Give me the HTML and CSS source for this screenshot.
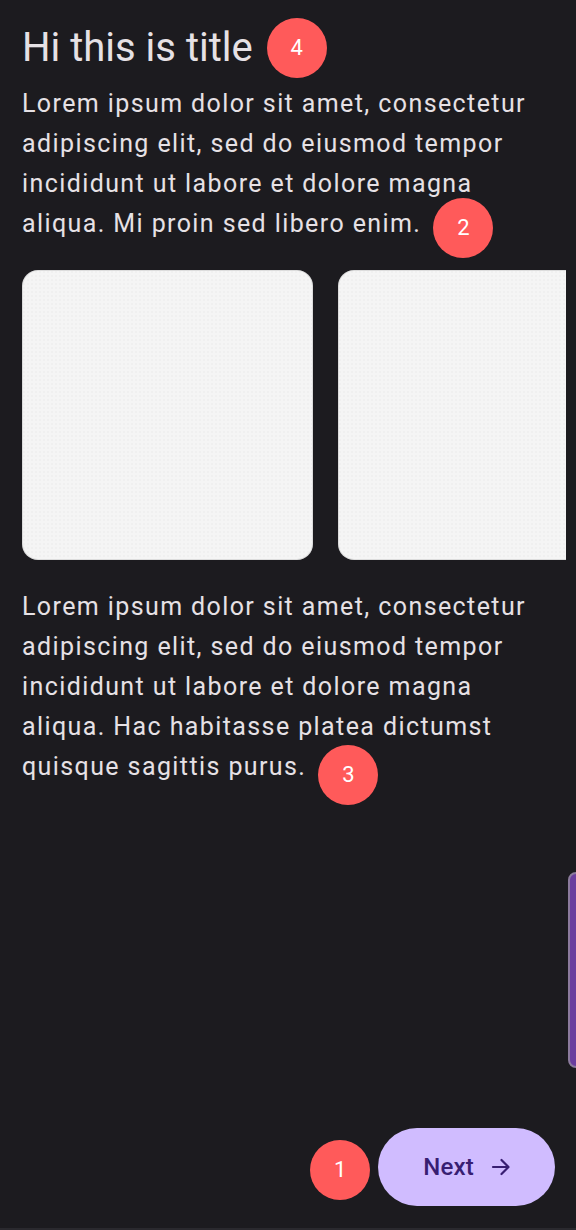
FILE: index.html
```html
<!DOCTYPE html>
<html lang="en">
<head>
<meta charset="utf-8">
<title>Onboarding</title>
<link rel="stylesheet" href="styles.css">
</head>
<body>
<div class="screen">
  <header class="title-row">
    <h1 class="title">Hi this is title</h1>
    <span class="badge">4</span>
  </header>
  <p class="para para-first">Lorem ipsum dolor sit amet, consectetur adipiscing elit, sed do eiusmod tempor incididunt ut labore et dolore magna aliqua. Mi proin sed libero enim.<span class="badge badge-inline badge-2">2</span></p>
  <div class="carousel">
    <div class="card"></div>
    <div class="card"></div>
  </div>
  <p class="para para-second">Lorem ipsum dolor sit amet, consectetur adipiscing elit, sed do eiusmod tempor incididunt ut labore et dolore magna aliqua. Hac habitasse platea dictumst quisque sagittis purus.<span class="badge badge-inline badge-3">3</span></p>
  <div class="footer">
    <span class="badge">1</span>
    <button class="next-btn">Next
      <svg class="arrow" viewBox="0 0 24 24" width="24" height="24" aria-hidden="true"><path d="M4 12h15M12.5 5l7 7-7 7" fill="none" stroke="currentColor" stroke-width="2.2" stroke-linecap="round" stroke-linejoin="round"/></svg>
    </button>
  </div>
  <div class="side-tab"></div>
</div>
</body>
</html>
```

FILE: styles.css
```css
html, body {
  margin: 0;
  padding: 0;
  background: #1c1b1f;
}
.screen {
  position: relative;
  box-sizing: border-box;
  height: 1230px;
  padding: 18px 0 0 22px;
  display: flex;
  flex-direction: column;
  font-family: Roboto, "Noto Sans", sans-serif;
  color: #e6e1e5;
  overflow: hidden;
  border-bottom: 2px solid #2a292e;
}
.title-row {
  display: flex;
  align-items: center;
  gap: 14px;
  height: 60px;
}
.title {
  margin: 0;
  font-size: 40px;
  font-weight: 400;
  line-height: 44px;
  color: #e6e1e5;
}
.badge {
  display: inline-flex;
  align-items: center;
  justify-content: center;
  width: 60px;
  height: 60px;
  border-radius: 50%;
  background: #ff5a5a;
  color: #ffffff;
  font-size: 22px;
  letter-spacing: 0;
  line-height: 1;
  flex-shrink: 0;
}
.badge-inline {
  vertical-align: middle;
  margin: -20px 0 -20px 12px;
  position: relative;
}
.badge-2 {
  top: 3px;
}
.badge-3 {
  top: 7px;
}
.para {
  margin: 0;
  padding-right: 24px;
  font-size: 25px;
  line-height: 40px;
  letter-spacing: 1.4px;
  color: #e6e1e5;
}
.para-first {
  margin-top: 6px;
}
.carousel {
  display: flex;
  gap: 25px;
  margin-top: 26px;
  margin-right: 10px;
  overflow: hidden;
}
.card {
  flex: 0 0 291px;
  height: 290px;
  border-radius: 16px;
  background-color: #f5f5f5;
  background-image: radial-gradient(circle, rgba(0,0,0,0.02) 1px, transparent 1px);
  background-size: 4px 4px;
  box-shadow: inset 0 0 0 1px #dcdcdc;
}
.carousel .card:last-child {
  border-radius: 16px 0 0 16px;
}
.para-second {
  margin-top: 27px;
}
.footer {
  margin-top: auto;
  margin-bottom: 22px;
  margin-right: 21px;
  display: flex;
  justify-content: flex-end;
  align-items: center;
  gap: 8px;
}
.footer .badge {
  position: relative;
  top: 3px;
}
.next-btn {
  display: flex;
  align-items: center;
  gap: 15px;
  height: 78px;
  padding: 0 42px 0 45px;
  border: none;
  border-radius: 39px;
  background: #d0bcff;
  color: #381e72;
  font-family: Roboto, "Noto Sans", sans-serif;
  font-size: 24px;
  font-weight: 500;
  letter-spacing: 0.2px;
}
.arrow {
  display: block;
}
.side-tab {
  position: absolute;
  right: -8px;
  top: 872px;
  width: 16px;
  height: 196px;
  box-sizing: border-box;
  border-radius: 8px;
  background: #6b3d9e;
  border: 2px solid #8b7a9c;
}
```
